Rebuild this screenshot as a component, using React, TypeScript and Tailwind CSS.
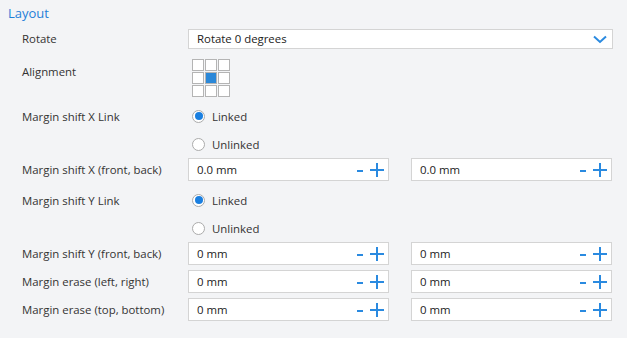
import React from "react";

const font = { fontFamily: '"Open Sans", "Noto Sans", sans-serif' };

function Label({ children, top = false }: { children: React.ReactNode; top?: boolean }) {
  return (
    <div className={`w-[166px] shrink-0 text-[11.4px] text-[#333] ${top ? "self-start pt-[4px]" : ""}`}>
      {children}
    </div>
  );
}

function Stepper({ value }: { value: string }) {
  return (
    <div className="flex h-[23px] w-[201px] items-center border border-[#d4d4d4] bg-white pl-[8px] pr-[4px]">
      <span className="flex-1 text-[11.4px] text-[#222]">{value}</span>
      <svg width="8" height="14" viewBox="0 0 8 14" className="mr-[6px]">
        <rect x="1" y="7" width="6" height="2" fill="#2a8ae0" />
      </svg>
      <svg width="14" height="14" viewBox="0 0 14 14">
        <rect x="0" y="6" width="14" height="2" fill="#2a8ae0" />
        <rect x="6" y="0" width="2" height="14" fill="#2a8ae0" />
      </svg>
    </div>
  );
}

function Radio({ checked, label }: { checked: boolean; label: string }) {
  return (
    <div className="flex items-center gap-[7px]">
      <span className="flex h-[13px] w-[13px] items-center justify-center rounded-full border border-[#ababab] bg-white">
        {checked && <span className="h-[8px] w-[8px] rounded-full bg-[#1a7fe0]" />}
      </span>
      <span className="text-[11.4px] text-[#333]">{label}</span>
    </div>
  );
}

function InputRow({ label, a, b }: { label: string; a: string; b: string }) {
  return (
    <div className="flex h-[23px] items-center">
      <Label>{label}</Label>
      <div className="flex gap-[22px]">
        <Stepper value={a} />
        <Stepper value={b} />
      </div>
    </div>
  );
}

function RadioPair({ label }: { label: string }) {
  return (
    <div className="flex flex-col">
      <div className="flex h-[28px] items-center pt-[1px]">
        <Label>{label}</Label>
        <div className="pl-[4px]">
          <Radio checked label="Linked" />
        </div>
      </div>
      <div className="flex h-[28px] items-center pt-[1px]">
        <Label>{""}</Label>
        <div className="pl-[4px]">
          <Radio checked={false} label="Unlinked" />
        </div>
      </div>
    </div>
  );
}

export default function App() {
  return (
    <div className="h-[338px] w-[627px] bg-[#f3f4f6]" style={font}>
      <div className="flex h-[29px] items-center pb-[2px] pl-[8px] text-[13px] text-[#1f7fd8]">Layout</div>
      <div className="flex flex-col pl-[22px]">
        <div className="flex h-[20px] items-center">
          <Label>Rotate</Label>
          <div className="flex h-[20px] w-[425px] items-center border border-[#d4d4d4] bg-white pl-[8px] pr-[5px]">
            <span className="flex-1 text-[11.4px] text-[#222]">Rotate 0 degrees</span>
            <svg width="14" height="9" viewBox="0 0 14 9">
              <path d="M1 1.5 L7 7 L13 1.5" fill="none" stroke="#2a8ae0" strokeWidth="2" />
            </svg>
          </div>
        </div>
        <div className="mt-[10px] flex">
          <Label top>Alignment</Label>
          <div className="ml-[4px] grid grid-cols-3 gap-[1px]">
            {Array.from({ length: 9 }).map((_, i) => (
              <div
                key={i}
                className={`h-[12px] w-[12px] border border-[#b4b4b4] ${i === 4 ? "bg-[#2b88d8]" : "bg-white"}`}
              />
            ))}
          </div>
        </div>
        <div className="mt-[5px]">
          <RadioPair label="Margin shift X Link" />
        </div>
        <InputRow label="Margin shift X (front, back)" a="0.0 mm" b="0.0 mm" />
        <div className="mt-[5px]">
          <RadioPair label="Margin shift Y Link" />
        </div>
        <div className="flex flex-col gap-[5px]">
          <InputRow label="Margin shift Y (front, back)" a="0 mm" b="0 mm" />
          <InputRow label="Margin erase (left, right)" a="0 mm" b="0 mm" />
          <InputRow label="Margin erase (top, bottom)" a="0 mm" b="0 mm" />
        </div>
      </div>
    </div>
  );
}
